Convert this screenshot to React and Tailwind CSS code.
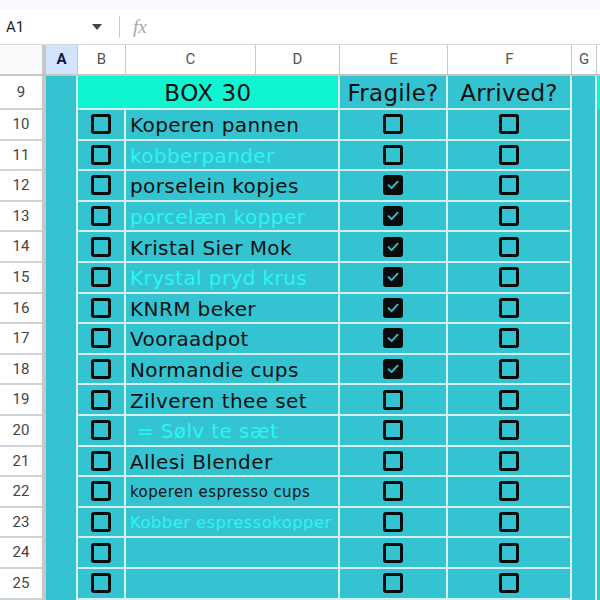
import React from 'react';

const rows = [
    { n: 10, text: 'Koperen pannen', cyan: false, size: 'text-[20px]', fragile: false },
    { n: 11, text: 'kobberpander', cyan: true, size: 'text-[20px]', fragile: false },
    { n: 12, text: 'porselein kopjes', cyan: false, size: 'text-[20px]', fragile: true },
    { n: 13, text: 'porcelæn kopper', cyan: true, size: 'text-[20px]', fragile: true },
    { n: 14, text: 'Kristal Sier Mok', cyan: false, size: 'text-[20px]', fragile: true },
    { n: 15, text: 'Krystal pryd krus', cyan: true, size: 'text-[20px]', fragile: true },
    { n: 16, text: 'KNRM beker', cyan: false, size: 'text-[20px]', fragile: true },
    { n: 17, text: 'Vooraadpot', cyan: false, size: 'text-[20px]', fragile: true },
    { n: 18, text: 'Normandie cups', cyan: false, size: 'text-[20px]', fragile: true },
    { n: 19, text: 'Zilveren thee set', cyan: false, size: 'text-[20px]', fragile: false },
    { n: 20, text: '\u00a0= Sølv te sæt', cyan: true, size: 'text-[20px]', fragile: false },
    { n: 21, text: 'Allesi Blender', cyan: false, size: 'text-[20px]', fragile: false },
    { n: 22, text: 'koperen espresso cups', cyan: false, size: 'text-[15px]', fragile: false },
    { n: 23, text: 'Kobber espressokopper', cyan: true, size: 'text-[16.5px]', fragile: false },
    { n: 24, text: '', cyan: false, size: 'text-[20px]', fragile: false },
    { n: 25, text: '', cyan: false, size: 'text-[20px]', fragile: false },
];

const Box = ({ checked }) => (
    checked ? (
        <div className="w-[20px] h-[20px] rounded-[3px] bg-[#0b0b0b] flex items-center justify-center">
            <svg width="14" height="14" viewBox="0 0 14 14" fill="none">
                <path d="M2.5 7.2 L5.6 10.2 L11.6 3.6" stroke="#35c3d1" strokeWidth="1.8" strokeLinecap="round" strokeLinejoin="round" />
            </svg>
        </div>
    ) : (
        <div className="w-[20px] h-[20px] rounded-[3px] border-[3px] border-[#0b0b0b]" />
    )
);

const ColHead = ({ w, label, active }) => (
    <div className={`${w} shrink-0 h-full flex items-center justify-center border-r border-[#c4c7c5] text-[15px] ${active ? 'bg-[#d3e3fd] font-bold text-[#0b1b3a]' : 'text-[#555]'}`}>
        {label}
    </div>
);

const App = () => {
    return (
        <div className="w-[600px] h-[600px] overflow-hidden bg-white" style={{ fontFamily: 'Roboto, "Liberation Sans", sans-serif' }}>
            <div className="h-[10px] bg-[#f8fafd]" />
            <div className="h-[35px] flex items-center border-b border-[#d5d8dc]">
                <div className="w-[92px] pl-[6px] text-[15px] text-[#1f1f1f]">A1</div>
                <svg width="10" height="6" viewBox="0 0 10 6"><path d="M0 0 L10 0 L5 6 Z" fill="#444" /></svg>
                <div className="w-px h-[22px] bg-[#c7c7c7] ml-[17px]" />
                <div className="ml-[13px] text-[19px] italic text-[#a6a6a6]" style={{ fontFamily: '"Liberation Serif", serif' }}>fx</div>
            </div>
            <div className="h-[31px] flex border-b-[2px] border-[#c4c7c5]">
                <div className="w-[46px] shrink-0 h-full bg-[#f8f9fa] border-r-[4px] border-[#c4c7c5]" />
                <ColHead w="w-[32px]" label="A" active />
                <ColHead w="w-[48px]" label="B" />
                <ColHead w="w-[130px]" label="C" />
                <ColHead w="w-[84px]" label="D" />
                <ColHead w="w-[108px]" label="E" />
                <ColHead w="w-[124px]" label="F" />
                <ColHead w="w-[25px]" label="G" />
                <div className="flex-1" />
            </div>
            <div className="flex">
                <div className="w-[46px] shrink-0 flex flex-col border-r-[4px] border-[#c4c7c5] text-[15px] text-[#444]">
                    <div className="h-[34px] flex items-center justify-center border-b-[2px] border-[#d0d3d6]">9</div>
                    {rows.map((r) => (
                        <div key={r.n} className="h-[30.6px] flex items-center justify-center border-b-[2px] border-[#d0d3d6]">{r.n}</div>
                    ))}
                </div>
                <div className="w-[32px] shrink-0 bg-[#33c3d1] border-r-[2px] border-[#d6f1f4]" />
                <div className="flex flex-col w-[494px] shrink-0" style={{ fontFamily: '"DejaVu Sans", sans-serif' }}>
                    <div className="h-[34px] flex border-b-[2px] border-[#d6f1f4] text-[#111]">
                        <div className="w-[262px] bg-[#0ff5d2] border-r-[2px] border-[#d6f1f4] flex items-center justify-center pt-[2px] text-[23px] tracking-[0.5px]">BOX 30</div>
                        <div className="w-[108px] bg-[#33c3d1] border-r-[2px] border-[#d6f1f4] flex items-center justify-center pt-[2px] text-[23px] tracking-[0.3px]">Fragile?</div>
                        <div className="w-[124px] bg-[#33c3d1] border-r-[2px] border-[#d6f1f4] flex items-center justify-center pt-[2px] text-[23px] tracking-[0.3px]">Arrived?</div>
                    </div>
                    {rows.map((r) => (
                        <div key={r.n} className="h-[30.6px] flex bg-[#33c3d1] border-b-[2px] border-[#d6f1f4]">
                            <div className="w-[48px] border-r-[2px] border-[#d6f1f4] flex items-center justify-center">
                                <Box checked={false} />
                            </div>
                            <div className={`w-[214px] border-r-[2px] border-[#d6f1f4] flex items-center pl-[4px] pt-[2px] whitespace-nowrap overflow-hidden tracking-[0.4px] ${r.size} ${r.cyan ? 'text-[#2ef4f6]' : 'text-[#111]'}`}>
                                {r.text}
                            </div>
                            <div className="w-[108px] border-r-[2px] border-[#d6f1f4] flex items-center justify-center">
                                <Box checked={r.fragile} />
                            </div>
                            <div className="w-[124px] border-r-[2px] border-[#d6f1f4] flex items-center justify-center">
                                <Box checked={false} />
                            </div>
                        </div>
                    ))}
                </div>
                <div className="w-[25px] shrink-0 bg-[#33c3d1] border-r-[2px] border-[#d6f1f4]" />
                <div className="flex-1 flex flex-col">
                    <div className="h-[34px] bg-[#0ff5d2]" />
                    <div className="flex-1 bg-[#33c3d1] h-[500px]" />
                </div>
            </div>
        </div>
    );
};

export default App;
